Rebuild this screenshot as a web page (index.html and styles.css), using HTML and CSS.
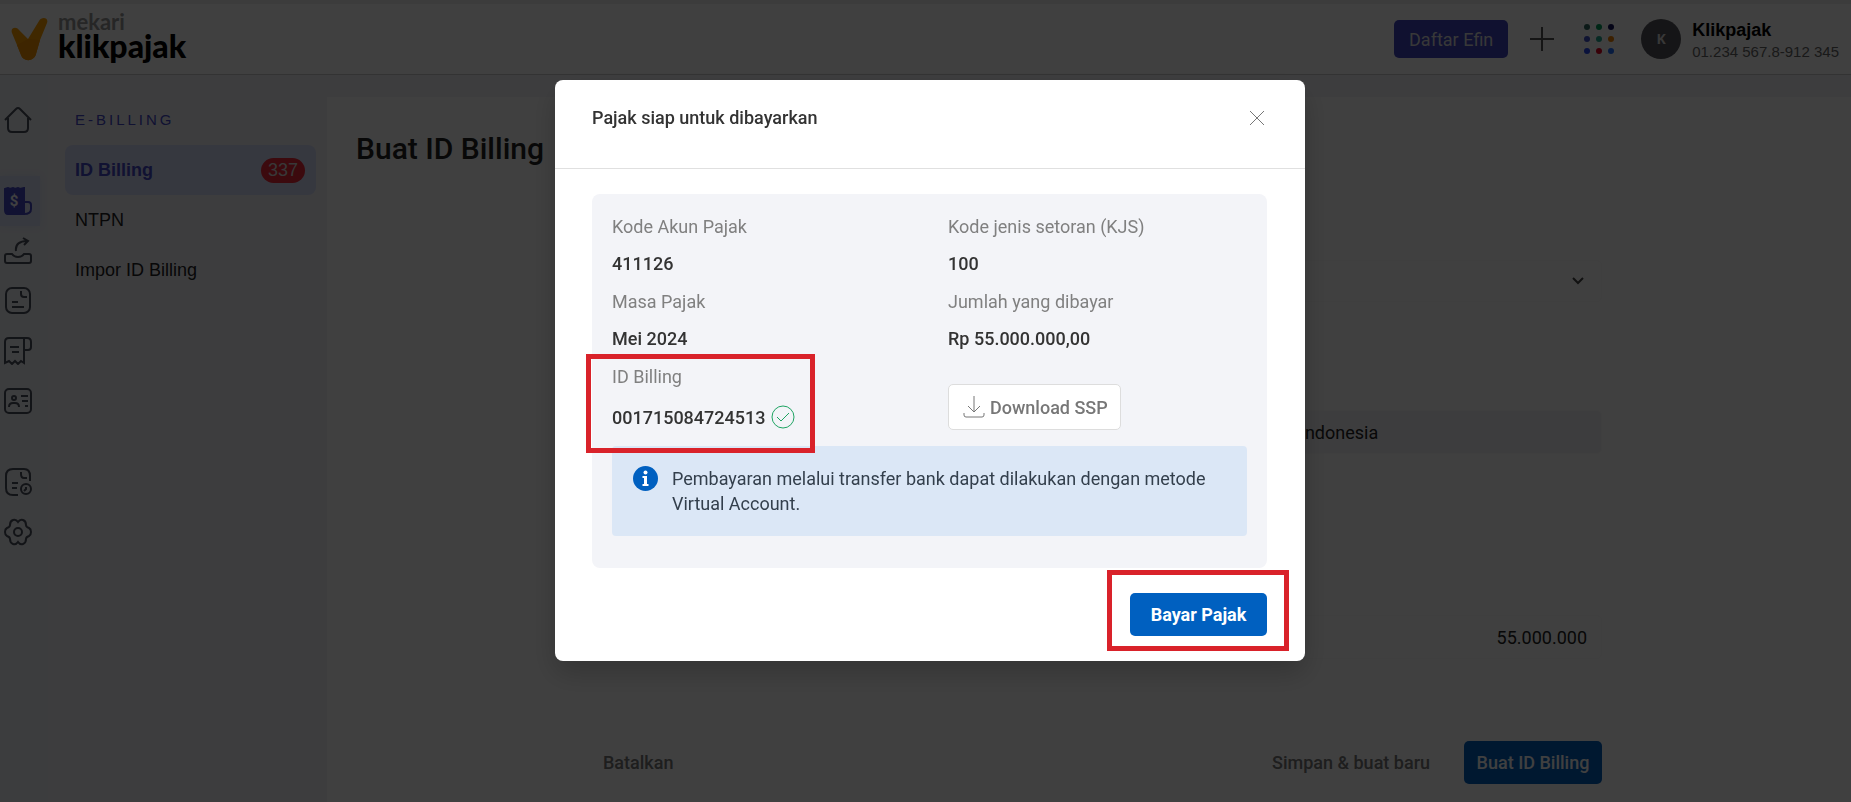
FILE: index.html
```html
<!DOCTYPE html>
<html lang="id">
<head>
    <meta charset="UTF-8">
    <meta name="viewport" content="width=device-width, initial-scale=1.0">
    <title>Klikpajak - Buat ID Billing</title>
    <link rel="stylesheet" href="styles.css">
</head>
<body>

<header class="topbar">
    <a class="logo" href="#">
        <svg class="logo-mark" width="37" height="43" viewBox="0 0 37 43">
            <path d="M1 15C-1 10 5 8 8 12L17 21L28 3C31-2 38 0 36 5L29 22L25 36C23 44 12 44 10 37L6 27Z" fill="#ffa000"/>
            <path d="M17 21L29 22L25 36C23 44 12 44 10 37L6 27Z" fill="#f59300"/>
        </svg>
        <span class="logo-text">
            <span class="logo-brand">mekari</span>
            <span class="logo-product">klikpajak</span>
        </span>
    </a>
    <div class="topbar-right">
        <button class="btn-efin">Daftar Efin</button>
        <button class="icon-btn" aria-label="Tambah">
            <svg width="24" height="24" viewBox="0 0 24 24" stroke="#555" stroke-width="2"><path d="M12 0V24M0 12H24"/></svg>
        </button>
        <button class="icon-btn apps" aria-label="Aplikasi">
            <svg width="30" height="30" viewBox="0 0 30 30">
                <circle cx="3" cy="3" r="3" fill="#33695f"/><circle cx="15" cy="3" r="3" fill="#009a5a"/><circle cx="27" cy="3" r="3" fill="#10105a"/>
                <circle cx="3" cy="15" r="3" fill="#4050c8"/><circle cx="15" cy="15" r="3" fill="#20a890"/><circle cx="27" cy="15" r="3" fill="#f08000"/>
                <circle cx="3" cy="27" r="3" fill="#2848f0"/><circle cx="15" cy="27" r="3" fill="#e00020"/><circle cx="27" cy="27" r="3" fill="#2070ff"/>
            </svg>
        </button>
        <span class="avatar">K</span>
        <div class="account">
            <strong>Klikpajak</strong>
            <span>01.234 567.8-912 345</span>
        </div>
    </div>
</header>

<div class="layout">
    <nav class="rail" aria-label="Modul">
        <a href="#" class="rail-item" aria-label="Beranda">
            <svg viewBox="0 0 28 28"><path d="M1 14L12 3Q14 1 16 3L27 14M4 12V22Q4 26 8 26H20Q24 26 24 22V12"/></svg>
        </a>
        <a href="#" class="rail-item active rail-gap" aria-label="E-Billing">
            <svg viewBox="0 0 28 28">
                <path class="solid" d="M1 2L4 1L6 2L9 1L11 2L14 1L16 2L20 1V27H4Q1 27 1 23Z"/>
                <path d="M20 15H24Q27 15 27 18V22Q27 27 20 27"/>
                <text x="10" y="19">$</text>
            </svg>
        </a>
        <a href="#" class="rail-item" aria-label="Lapor">
            <svg viewBox="0 0 28 28"><path d="M12 14C11 7 16 4 23 4M19 1L24 4L20 8M3 17H8Q10 20 14 20T20 17H25Q27 17 27 19V24Q27 26 25 26H3Q1 26 1 24V19Q1 17 3 17Z"/></svg>
        </a>
        <a href="#" class="rail-item" aria-label="Dokumen">
            <svg viewBox="0 0 28 28"><rect x="2" y="1" width="24" height="25" rx="6"/><path d="M17 4V7Q17 10 20 10H23M8 15H14M8 20H20"/></svg>
        </a>
        <a href="#" class="rail-item" aria-label="Faktur">
            <svg viewBox="0 0 28 28"><path d="M20 13V26L17 24L14 27L11 24L8 27L5 24L1 26V5Q1 1 5 1H23Q27 1 27 5V10Q27 13 24 13H20V1M6 10H15M8 15H15"/></svg>
        </a>
        <a href="#" class="rail-item" aria-label="Kontak">
            <svg viewBox="0 0 28 28"><rect x="1" y="2" width="26" height="24" rx="4"/><circle cx="10" cy="11" r="2"/><path d="M5 20Q5 16 9 16H11Q15 16 15 20M17 9H24M18 14H24M21 19H24"/></svg>
        </a>
        <a href="#" class="rail-item rail-gap" aria-label="Arsip">
            <svg viewBox="0 0 28 28"><path d="M26 13V8Q26 1 20 1H9Q2 1 2 8V20Q2 27 9 27H14M17 4V6Q17 10 20 10H23M8 15H14M8 20H13"/><circle cx="22" cy="21" r="5"/><path d="M20 23L22 21V19"/></svg>
        </a>
        <a href="#" class="rail-item" aria-label="Pengaturan">
            <svg viewBox="0 0 28 28"><circle cx="14" cy="14" r="4"/><path d="M14 4Q16 1 19 2Q22 3 22 7Q22 9 25 10Q27 11 27 14Q27 17 25 18Q22 19 22 21Q22 25 19 26Q16 27 14 24Q12 27 9 26Q6 25 6 21Q6 19 3 18Q1 17 1 14Q1 11 3 10Q6 9 6 7Q6 3 9 2Q12 1 14 4Z"/></svg>
        </a>
    </nav>

    <nav class="sidebar" aria-label="E-Billing">
        <h2>E-BILLING</h2>
        <a href="#" class="menu-item active">ID Billing <span class="badge">337</span></a>
        <a href="#" class="menu-item">NTPN</a>
        <a href="#" class="menu-item">Impor ID Billing</a>
    </nav>

    <main class="content">
        <h1>Buat ID Billing</h1>
        <form class="form">
            <div class="select-wrap">
                <select aria-label="Jenis pajak"><option></option></select>
                <svg width="12" height="8" viewBox="0 0 12 8"><path d="M1 1L6 6L11 1" fill="none" stroke="#444" stroke-width="2"/></svg>
            </div>
            <input class="field-country" type="text" value="Indonesia" aria-label="Negara" readonly>
            <input class="field-amount" type="text" value="55.000.000" aria-label="Jumlah">
            <div class="form-actions">
                <button type="button" class="btn-text">Batalkan</button>
                <button type="button" class="btn-text push">Simpan &amp; buat baru</button>
                <button type="button" class="btn-primary">Buat ID Billing</button>
            </div>
        </form>
    </main>
</div>

<div class="backdrop">
    <section class="modal" role="dialog" aria-labelledby="modal-title">
        <div class="modal-header">
            <h3 id="modal-title">Pajak siap untuk dibayarkan</h3>
            <button class="icon-btn" aria-label="Tutup">
                <svg width="20" height="20" viewBox="0 0 20 20" stroke="#777" stroke-width="1"><path d="M3 3L17 17M17 3L3 17"/></svg>
            </button>
        </div>
        <div class="modal-body">
            <div class="card">
                <dl class="details">
                    <div>
                        <dt>Kode Akun Pajak</dt>
                        <dd>411126</dd>
                    </div>
                    <div>
                        <dt>Kode jenis setoran (KJS)</dt>
                        <dd>100</dd>
                    </div>
                    <div>
                        <dt>Masa Pajak</dt>
                        <dd>Mei 2024</dd>
                    </div>
                    <div>
                        <dt>Jumlah yang dibayar</dt>
                        <dd>Rp 55.000.000,00</dd>
                    </div>
                    <div class="billing-id">
                        <dt>ID Billing</dt>
                        <dd>
                            001715084724513
                            <svg width="24" height="24" viewBox="0 0 24 24" fill="none" stroke="#1fa463"><circle cx="12" cy="12" r="11"/><path d="M6 12L10 16L18 8"/></svg>
                        </dd>
                    </div>
                    <div class="download">
                        <button class="btn-download">
                            <svg width="22" height="22" viewBox="0 0 22 22" fill="none" stroke="#777"><path d="M11 0V16M5 10L11 16L17 10M1 17V19Q1 21 3 21H19Q21 21 21 19V17"/></svg>
                            Download SSP
                        </button>
                    </div>
                </dl>
                <div class="alert">
                    <svg width="25" height="25" viewBox="0 0 25 25">
                        <circle cx="12.5" cy="12.5" r="12.5" fill="#0060c0"/>
                        <circle cx="12.5" cy="6.5" r="2" fill="#fff"/>
                        <path d="M9.5 10H14V18H15.5V20H9.5V18H11V12H9.5Z" fill="#fff"/>
                    </svg>
                    <p>Pembayaran melalui transfer bank dapat dilakukan dengan metode Virtual Account.</p>
                </div>
            </div>
            <div class="modal-footer">
                <button class="btn-primary btn-pay">Bayar Pajak</button>
            </div>
        </div>
    </section>
</div>

</body>
</html>
```
FILE: styles.css
```css
/* Global Styles */
*,
*::after {
    box-sizing: border-box;
}

body {
    margin: 0;
    height: 100vh;
    overflow: hidden;
    display: flex;
    flex-direction: column;
    background-color: #f4f4f8;
    color: #222;
    font-family: Roboto, sans-serif;
    font-size: 18px;
}

h1, h2, h3, p, dl, dd {
    margin: 0;
}

a {
    color: inherit;
    text-decoration: none;
}

button, input, select {
    font: inherit;
    color: inherit;
}

button {
    border: none;
    padding: 0;
    background: none;
    cursor: pointer;
}

/* Top bar */
.topbar {
    display: flex;
    justify-content: space-between;
    align-items: center;
    height: 75px;
    padding: 0 12px 0 11px;
    background-color: #fff;
    border-top: 4px solid #eee;
    border-bottom: 1px solid #ccc;
}

.logo {
    display: flex;
    align-items: center;
    gap: 10px;
}

.logo-text {
    display: flex;
    flex-direction: column;
    padding-bottom: 6px;
    font-family: Lato, sans-serif;
}

.logo-brand {
    color: #999;
    font-size: 22px;
    font-weight: 700;
    line-height: 20px;
}

.logo-product {
    color: #000;
    font-size: 32px;
    font-weight: 900;
    line-height: 28px;
}

.topbar-right {
    display: flex;
    align-items: center;
}

.btn-efin {
    height: 38px;
    width: 114px;
    margin-right: 22px;
    border-radius: 5px;
    background-color: #4044c0;
    color: #ddd;
}

.icon-btn svg {
    display: block;
}

.apps {
    margin: 0 27px 0 30px;
}

.avatar {
    width: 40px;
    height: 40px;
    margin-right: 11px;
    border-radius: 50%;
    background-color: #55555c;
    color: #ddd;
    font: 700 14px/40px "Noto Sans", sans-serif;
    text-align: center;
}

.account {
    display: flex;
    flex-direction: column;
    padding-top: 3px;
    font-family: "Liberation Sans", sans-serif;
    color: #000;
    line-height: 22px;
}

.account span {
    color: #666;
    font-size: 15px;
}

/* Layout */
.layout {
    display: flex;
    flex: 1;
    min-height: 0;
}

.rail {
    width: 48px;
    padding-top: 20px;
    background-color: #eff1f6;
}

.rail-item {
    display: flex;
    align-items: center;
    height: 50px;
    padding-left: 4px;
}

.rail-item svg {
    width: 28px;
    height: 28px;
    fill: none;
    stroke: #4a4f5c;
    stroke-width: 2;
}

.rail-gap {
    margin-top: 31px;
}

.rail-item.active {
    background-color: #dce4fa;
    margin-right: 8px;
    box-shadow: 0 0 8px #dce4fa;
}

.rail-item.active svg {
    stroke: #4448c8;
}

.rail-item .solid {
    fill: #4448c8;
}

.rail-item text {
    fill: #fff;
    stroke: none;
    font-size: 15px;
    font-weight: 700;
    text-anchor: middle;
}

.sidebar {
    width: 279px;
    padding: 20px 11px 0 17px;
    font-family: "Liberation Sans", sans-serif;
}

.sidebar h2 {
    padding-left: 10px;
    color: #4448c8;
    font-size: 15px;
    font-weight: 400;
    line-height: 50px;
    letter-spacing: 3px;
}

.menu-item {
    display: flex;
    align-items: center;
    justify-content: space-between;
    height: 50px;
    padding: 0 11px 0 10px;
    border-radius: 8px;
    color: #222;
}

.menu-item.active {
    background-color: #d6defa;
    color: #4448c8;
    font-weight: 700;
}

.badge {
    width: 44px;
    border-radius: 13px;
    background-color: #ee2a3a;
    color: #ddd;
    font-weight: 400;
    line-height: 25px;
    text-align: center;
}

/* Main content */
.content {
    flex: 1;
    margin-top: 22px;
    padding: 34px 249px 0 29px;
    background-color: #fff;
}

.content h1 {
    color: #222;
    font-size: 30px;
    font-weight: 500;
    line-height: 36px;
}

.form {
    display: flex;
    flex-direction: column;
    align-items: flex-end;
    margin: 93px 0 0 247px;
}

.select-wrap {
    display: flex;
    align-items: center;
    justify-content: flex-end;
    width: 100%;
    height: 42px;
    padding-right: 17px;
    border: 1px solid #fafafa;
    border-radius: 5px;
}

.select-wrap select {
    flex: 1;
    border: none;
    background: none;
    appearance: none;
}

.form input {
    height: 44px;
    padding: 0 14px;
    border: 1px solid #fafafa;
    border-radius: 5px;
    background-color: #fff;
}

.form .field-country {
    width: 317px;
    margin-top: 108px;
    background-color: #f4f4f8;
}

.form .field-amount {
    width: 320px;
    margin-top: 161px;
    text-align: right;
}

.form-actions {
    display: flex;
    align-items: center;
    width: 100%;
    margin-top: 82px;
}

.btn-text {
    color: #777;
    font-weight: 500;
}

.push {
    margin-left: auto;
    margin-right: 34px;
}

.btn-primary {
    height: 43px;
    width: 138px;
    border-radius: 5px;
    background-color: #0060c0;
    color: #fff;
    font-weight: 500;
}

/* Modal */
.backdrop {
    position: fixed;
    inset: 0;
    display: flex;
    justify-content: center;
    align-items: flex-start;
    padding: 80px 0 0 9px;
    background-color: rgba(0, 0, 0, 0.75);
}

.modal {
    width: 750px;
    border-radius: 8px;
    background-color: #fff;
    box-shadow: 0 12px 28px rgba(0, 0, 0, 0.2);
}

.modal-header {
    display: flex;
    justify-content: space-between;
    align-items: flex-start;
    height: 89px;
    padding: 28px 38px 0 37px;
    border-bottom: 1px solid #e0e0e0;
}

.modal-header h3 {
    color: #333;
    font-size: 18px;
    font-weight: 500;
    line-height: 20px;
}

.modal-body {
    padding: 25px 38px 25px 37px;
}

.card {
    padding: 14px 20px 32px;
    border-radius: 8px;
    background-color: #f3f4f8;
}

.details {
    display: grid;
    grid-template-columns: 336px 1fr;
    row-gap: 1px;
    line-height: 37px;
}

.details dt {
    color: #808080;
}

.details dd {
    color: #333;
    font-weight: 500;
}

.billing-id {
    position: relative;
}

.billing-id dd {
    display: flex;
    align-items: center;
    gap: 6px;
    height: 44px;
}

.download {
    padding-top: 26px;
}

.btn-download {
    display: flex;
    align-items: center;
    gap: 5px;
    height: 46px;
    padding: 0 12px 0 14px;
    border: 1px solid #ddd;
    border-radius: 5px;
    background-color: #fff;
    color: #777;
    font-weight: 500;
}

.alert {
    display: flex;
    gap: 14px;
    margin-top: 7px;
    padding: 20px 21px;
    border-radius: 4px;
    background-color: #dbe7f6;
    color: #333f4c;
    line-height: 25px;
}

.alert svg {
    flex: none;
}

.modal-footer {
    display: flex;
    justify-content: flex-end;
    margin-top: 25px;
}

.btn-pay {
    position: relative;
    width: 137px;
    font-weight: 700;
}

/* Red callout frames */
.billing-id::after,
.btn-pay::after {
    content: "";
    position: absolute;
    border: 5px solid #d9222a;
    pointer-events: none;
}

.billing-id::after {
    top: -4px;
    left: -26px;
    width: 229px;
    height: 99px;
}

.btn-pay::after {
    inset: -23px -22px -15px -23px;
}
```
